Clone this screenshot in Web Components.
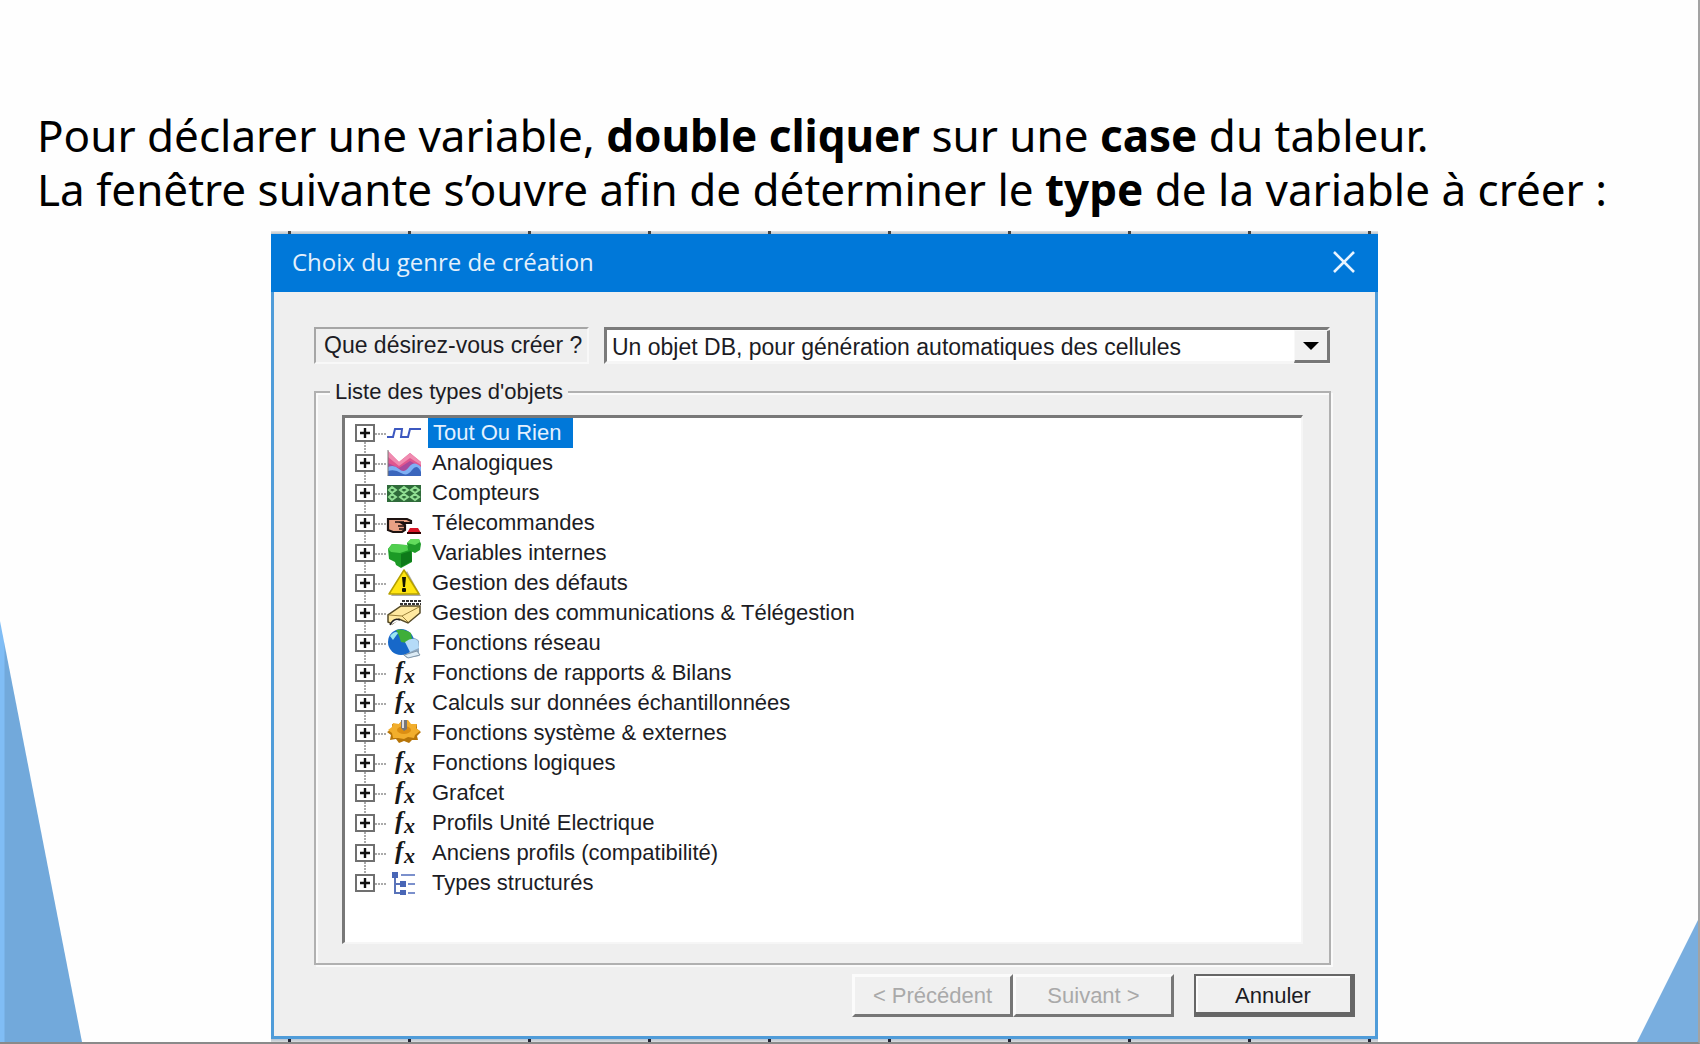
<!DOCTYPE html>
<html lang="fr">
<head>
<meta charset="utf-8">
<title>Choix du genre de création</title>
<style>
html, body { margin: 0; height: 100%; background: #fefefe; }
</style>
</head>
<body>
<slide-page>
  <slide-heading slot="heading">
    <p>Pour déclarer une variable, <b>double cliquer</b> sur une <b>case</b> du tableur.</p>
    <p>La fenêtre suivante s’ouvre afin de déterminer le <b>type</b> de la variable à créer :</p>
  </slide-heading>
  <choice-dialog caption="Choix du genre de création">
    <tree-item icon="signal" selected>Tout Ou Rien</tree-item>
    <tree-item icon="chart">Analogiques</tree-item>
    <tree-item icon="counter">Compteurs</tree-item>
    <tree-item icon="hand">Télecommandes</tree-item>
    <tree-item icon="cubes">Variables internes</tree-item>
    <tree-item icon="warning">Gestion des défauts</tree-item>
    <tree-item icon="modem">Gestion des communications &amp; Télégestion</tree-item>
    <tree-item icon="globe">Fonctions réseau</tree-item>
    <tree-item icon="fx">Fonctions de rapports &amp; Bilans</tree-item>
    <tree-item icon="fx">Calculs sur données échantillonnées</tree-item>
    <tree-item icon="gear">Fonctions système &amp; externes</tree-item>
    <tree-item icon="fx">Fonctions logiques</tree-item>
    <tree-item icon="fx">Grafcet</tree-item>
    <tree-item icon="fx">Profils Unité Electrique</tree-item>
    <tree-item icon="fx">Anciens profils (compatibilité)</tree-item>
    <tree-item icon="structure">Types structurés</tree-item>
    <win-button slot="step" disabled>&lt; Précédent</win-button>
    <win-button slot="step" disabled>Suivant &gt;</win-button>
    <win-button slot="cancel" primary>Annuler</win-button>
  </choice-dialog>
</slide-page>

<script>
const define = (name, html, setup) => customElements.define(name, class extends HTMLElement {
  connectedCallback() {
    if (this.shadowRoot) return;
    this.attachShadow({ mode: 'open' }).innerHTML = typeof html === 'function' ? html(this) : html;
    if (setup) setup(this);
  }
});

define('slide-page', `
<style>
:host { display: flex; flex-direction: column; position: relative; min-height: 100vh; box-sizing: border-box;
  border-right: 2px solid #a3a3a3; border-bottom: 2px solid #8a8a8a; background: #fefefe; overflow: hidden; }
.left, .right { position: absolute; bottom: 0; }
.left { left: 0; width: 82px; height: 421px; clip-path: polygon(0 0, 100% 100%, 0 100%);
  background: linear-gradient(90deg, #80bdf5 4px, #72a9db 5px); }
.right { right: 0; width: 61px; height: 122px; clip-path: polygon(100% 0, 100% 100%, 0 100%); background: #79aedf; }
main { display: flex; flex-direction: column; flex: 1; padding: 0 320px 0 271px; }
</style>
<div class="left"></div><div class="right"></div>
<slot name="heading"></slot>
<main><slot></slot></main>`);

define('slide-heading', `
<style>
:host { display: block; padding: 108px 0 17px 37px; font: 44px/54px "Noto Sans", "Open Sans", sans-serif; color: #000; white-space: nowrap; }
::slotted(p) { margin: 0; }
</style><slot></slot>`);

define('choice-dialog', host => `
<style>
:host { display: flex; flex-direction: column; flex: 1; font: 22px/28px "Liberation Sans", Arial, sans-serif; color: #1c1c24; }
.grid-edge { height: 3px; flex: none; }
.grid-edge.top { margin-top: -2px; background:
   repeating-linear-gradient(90deg, transparent 0 17px, #444 17px 20px, transparent 20px 120px),
   linear-gradient(#e6e6e6, #b9c4cc); }
.grid-edge.bottom { background:
   repeating-linear-gradient(90deg, transparent 0 17px, #223 17px 20px, transparent 20px 120px),
   linear-gradient(#b4c4d4, #dcdcdc); }
section { display: flex; flex-direction: column; flex: 1; background: #efefef; border: solid #4f9cd9; border-width: 0 3px 3px; }
header { display: flex; align-items: center; justify-content: space-between; height: 58px; margin: 0 -3px; padding: 0 23px 2px 21px;
  box-sizing: border-box; background: #0078d9; color: #e4f0fc; }
h1 { margin: 0; font: 24px/32px "Open Sans", "Noto Sans", sans-serif; }
.close { display: flex; padding: 0; border: 0; background: none; color: #e8f4ff; }
form { display: flex; flex-direction: column; flex: 1; padding: 35px 20px 19px 40px; }
.row { display: flex; gap: 15px; margin-right: 25px; font-size: 23px; }
label { box-sizing: border-box; width: 275px; height: 37px; padding: 2px 0 0 8px; border: 2px solid; border-color: #a6a6a6 #f8f8f8 #f8f8f8 #a6a6a6; white-space: nowrap; }
.combo { position: relative; flex: 1; height: 37px; }
select { appearance: none; box-sizing: border-box; width: 100%; height: 37px; margin: 0; padding: 2px 40px 0 5px; border: 3px solid;
  border-color: #7b7b7b #f6f6f6 #f6f6f6 #7b7b7b; border-radius: 0; background: #fff; color: inherit; font: inherit; line-height: 28px; opacity: 1; }
.arrow { position: absolute; top: 3px; right: 0; bottom: 1px; width: 36px; box-sizing: border-box; pointer-events: none; display: grid; place-items: center;
  background: #f1f1f1; border: solid; border-width: 1px 3px 3px 1px; border-color: #f8f8f8 #777 #777 #f8f8f8; }
fieldset { flex: 1; margin: 14px 24px 0 0; padding: 9px 26px 16px 26px; border: 2px solid #b0b0b0; box-shadow: 2px 2px #fafafa, inset 2px 2px #fafafa; min-width: 0; }
legend { margin-left: -12px; padding: 0 5px; line-height: 28px; background: #efefef; }
.tree { padding-bottom: 44px; border: solid; border-width: 3px 2px 2px 3px; border-color: #787878 #f6f6f6 #f6f6f6 #787878; background: #fff; }
footer { display: flex; justify-content: flex-end; gap: 20px; margin-top: 9px; }
.steps { display: flex; }
</style>
<div class="grid-edge top"></div>
<section role="dialog" aria-labelledby="caption">
  <header><h1 id="caption">${host.getAttribute('caption')}</h1>
    <button class="close" aria-label="Fermer"><svg width="22" height="22" viewBox="0 0 22 22" fill="none" stroke="currentColor" stroke-width="2.6"><path d="M1 1L21 21M21 1L1 21"/></svg></button>
  </header>
  <form onsubmit="return false">
    <div class="row">
      <label for="kind">Que désirez-vous créer ?</label>
      <div class="combo">
        <select id="kind"><option>Un objet DB, pour génération automatiques des cellules</option></select>
        <span class="arrow"><svg width="16" height="8" viewBox="0 0 16 8"><path d="M0 0H16L8 8Z" fill="#000"/></svg></span>
      </div>
    </div>
    <fieldset><legend>Liste des types d'objets</legend>
      <div class="tree" role="tree"><slot></slot></div>
    </fieldset>
    <footer><div class="steps"><slot name="step"></slot></div><slot name="cancel"></slot></footer>
  </form>
</section>
<div class="grid-edge bottom"></div>`);

define('win-button', host => `
<style>
:host { display: block; width: 161px; }
button { box-sizing: border-box; width: 100%; height: 43px; margin: 0; padding: 0; border: 3px solid; border-color: #fbfbfb #767676 #767676 #fbfbfb; border-radius: 0;
  background: #f0f0f0; color: #1c1c24; font: inherit; line-height: 28px; }
button:disabled { color: #a9a9a9; }
:host([primary]) button { padding-top: 3px; border-width: 2px 5px 5px 2px; border-color: #666; box-shadow: inset 2px 2px #fcfcfc; }
</style><button type="button" ${host.hasAttribute('disabled') ? 'disabled' : ''}><slot></slot></button>`);

const icons = {
  signal: `<path d="M0 19H6L8 11H15L14 19H21L23 11H34" fill="none" stroke="#3c58c0" stroke-width="2"/>`,
  chart: `<path d="M1 3L12 14L23 5L34 14V28H1Z" fill="#e0568f"/><path d="M1 3L12 14L23 5L34 14V17L23 10L12 18L1 9Z" fill="#f08bb0"/><path d="M1 15L12 20L23 13L34 19V28H1Z" fill="#a94a9c"/><path d="M1 19Q7 16 12 21T22 19T34 19V28H1Z" fill="#7fb0f4"/><path d="M1 23Q8 21 14 25T25 22T34 24V28H1Z" fill="#3b66bd"/><path d="M1 2V28" stroke="#777"/>`,
  counter: `<rect y="7" width="34" height="17" fill="#2f6b3a"/><g fill="none" stroke="#92df94" stroke-width="2"><path d="M5 9L9 12L5 15L2 12ZM5 16L9 19L5 22L2 19ZM17 9L21 12L17 15L13 12ZM17 16L21 19L17 22L13 19ZM28 9L32 12L28 15L24 12ZM28 16L32 19L28 22L24 19Z"/></g>`,
  hand: `<path d="M1 11H20L24 13V15H15L18 17V22L15 24H6L1 22Z" fill="#e9a184" stroke="#1d1210" stroke-width="2.2"/><path d="M8 14H17M11 18H18M12 21H17" stroke="#1d1210" stroke-width="1.6"/><path d="M20 25L23 20H31L34 25Z" fill="#d81526"/><path d="M20 25H34" stroke="#300" stroke-width="2"/>`,
  cubes: `<path d="M1 11L5 6L18 7L25 11L25 24L14 30L9 27L8 24L2 21Z" fill="#1c9a26"/><path d="M1 11L5 6L20 7L22 12L13 15L4 14Z" fill="#52cf50"/><path d="M14 16L24 13L25 23L14 29Z" fill="#0e7a1a"/><path d="M20 5L24 1L32 1L34 6L33 12L28 15L21 12Z" fill="#1f9c29"/><path d="M20 5L24 1L32 1L33 4L28 7Z" fill="#62dc5c"/>`,
  warning: `<path d="M4 28H34L20 3Z" fill="#777" opacity=".6"/><path d="M17 2L32 26H2Z" fill="#ffe512" stroke="#b6a100" stroke-width="1.5" stroke-linejoin="round"/><path d="M15 9H19L18 19H16Z" fill="#151500"/><rect x="15" y="20" width="4" height="4" rx="1" fill="#151500"/>`,
  modem: `<path d="M15 3H34M13 6H34" stroke="#333" stroke-width="2" stroke-dasharray="3 1"/><path d="M14 8H33V15L21 25L12 21L5 26L1 24V17Z" fill="#ffe9a0" stroke="#564a26" stroke-width="1.5"/><path d="M2 17L15 18L21 24M15 18L32 9" fill="none" stroke="#9b813a"/><path d="M3 27Q7 19 13 22" fill="#fff" stroke="#222" stroke-width="1.5"/>`,
  globe: `<path d="M18 11Q27 7 32 13L32 28L20 30L14 25Z" fill="#8fa8c0"/><circle cx="14" cy="14" r="13" fill="#1768c9"/><path d="M9 2Q16 0 24 5L25 11L20 15L14 14L12 8Z" fill="#3fae3a"/><path d="M3 8Q8 2 11 5L6 12Z" fill="#9ae8f0"/><path d="M18 14Q26 8 31 13L32 20L23 24Z" fill="#b5dbf8"/><path d="M17 27L30 23L33 27L21 30Z" fill="#dcebf5" stroke="#8197aa"/>`,
  fx: `<g font-family="Liberation Serif" font-weight="bold" font-style="italic" fill="#161616"><text x="8" y="21" font-size="25">f</text><text x="17" y="25" font-size="22">x</text></g>`,
  gear: `<path d="M0 14L5 11L5 6L11 7L15 3L21 3L24 7L30 6L30 11L34 14L30 18L31 22L25 22L22 25L17 23L12 25L9 21L3 22L4 17Z" fill="#b77508"/><path d="M1 12L5 9L6 5L12 6L15 2L21 2L24 6L30 6L29 10L33 13L28 17L27 20L21 19L17 21L11 20L6 20L5 15Z" fill="#f2ae2c"/><ellipse cx="17" cy="12" rx="7" ry="4" fill="#dc8e12"/><path d="M14 2H20V11L17 13L14 10Z" fill="#777"/><path d="M16 2V10" stroke="#ddd" stroke-width="2"/>`,
  structure: `<path d="M8 7V25H15M8 16H15" fill="none" stroke="#5973b9" stroke-width="2"/><path d="M14 7H28M21 16H28M21 25H28" stroke="#7b90cc" stroke-width="2"/><path d="M5 4H11V10H5ZM13 13H19V19H13ZM13 22H19V27H13Z" fill="#4966b6"/>`
};

define('tree-icon', host => `
<style>:host { display: block; width: 34px; height: 30px; } svg { display: block; overflow: visible; }</style>
<svg width="34" height="30" viewBox="0 0 34 30" aria-hidden="true">${icons[host.getAttribute('name')]}</svg>`);

define('tree-item', host => `
<style>
:host { display: flex; align-items: center; height: 30px; padding-left: 10px; }
.branch { display: flex; align-items: center; align-self: stretch; width: 32px;
  background: repeating-linear-gradient(#aaa 0 2px, transparent 2px 3px) 9px 0 / 2px 100% no-repeat,
              repeating-linear-gradient(90deg, #aaa 0 2px, transparent 2px 3px) 20px 15px / 12px 2px no-repeat; }
:host(:first-of-type) .branch { background-position: 9px 15px, 20px 15px; }
:host(:last-of-type) .branch { background-size: 2px 15px, 12px 2px; }
button { display: block; width: 20px; height: 18px; padding: 0; border: 2px solid #707070; background: #fff; }
button svg { display: block; margin: auto; }
.name { margin-left: 7px; padding: 0 4px; line-height: 30px; white-space: nowrap; }
:host([selected]) .name { background: #0078d9; color: #e4f1ff; padding: 0 12px 0 5px; }
</style>
<div class="branch"><button type="button" aria-label="Développer"><svg width="12" height="12" viewBox="0 0 12 12"><path d="M1 6H11M6 1V11" stroke="#111" stroke-width="2.4"/></svg></button></div>
<tree-icon name="${host.getAttribute('icon')}"></tree-icon>
<span class="name"><slot></slot></span>`, host => host.setAttribute('role', 'treeitem'));
</script>
</body>
</html>
